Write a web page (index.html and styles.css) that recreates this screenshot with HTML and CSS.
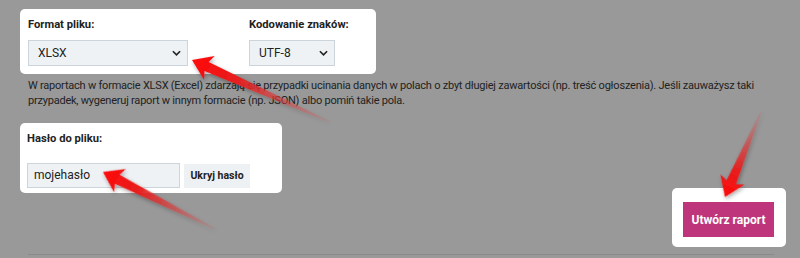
FILE: index.html
```html
<!DOCTYPE html>
<html lang="pl">
<head>
<meta charset="utf-8">
<title>Raport</title>
<link rel="stylesheet" href="styles.css">
</head>
<body>
<div class="page">
  <div class="card card-format">
    <div class="field field-format">
      <label class="label">Format pliku:</label>
      <div class="select select-wide"><span>XLSX</span><svg class="chev" viewBox="0 0 10 6" width="9" height="6"><path d="M1 1l4 4 4-4" fill="none" stroke="#222" stroke-width="1.8"/></svg></div>
    </div>
    <div class="field field-enc">
      <label class="label">Kodowanie znaków:</label>
      <div class="select select-narrow"><span>UTF-8</span><svg class="chev" viewBox="0 0 10 6" width="9" height="6"><path d="M1 1l4 4 4-4" fill="none" stroke="#222" stroke-width="1.8"/></svg></div>
    </div>
  </div>
  <p class="note">W raportach w formacie XLSX (Excel) zdarzają się przypadki ucinania danych w polach o zbyt długiej zawartości (np. treść ogłoszenia). Jeśli zauważysz taki przypadek, wygeneruj raport w innym formacie (np. JSON) albo pomiń takie pola.</p>
  <div class="row">
    <div class="card card-pass">
      <label class="label">Hasło do pliku:</label>
      <div class="pass-row">
        <div class="input">mojehasło</div>
        <button class="btn-light">Ukryj hasło</button>
      </div>
    </div>
    <div class="card card-submit">
      <button class="btn-primary">Utwórz raport</button>
    </div>
  </div>
  <div class="rule"></div>
</div>
<svg class="arrows" width="800" height="258" viewBox="0 0 800 258">
  <defs>
    <linearGradient id="ag" x1="0" y1="0" x2="1" y2="0">
      <stop offset="0" stop-color="#ff0a0a"/>
      <stop offset="0.3" stop-color="#e81c1c"/>
      <stop offset="1" stop-color="#d85a5a" stop-opacity="0.15"/>
    </linearGradient>
    <filter id="sh" x="-20%" y="-50%" width="140%" height="200%">
      <feGaussianBlur in="SourceAlpha" stdDeviation="2"/>
      <feOffset dx="1" dy="2" result="b"/>
      <feComponentTransfer><feFuncA type="linear" slope="0.35"/></feComponentTransfer>
      <feMerge><feMergeNode/><feMergeNode in="SourceGraphic"/></feMerge>
    </filter>
  </defs>
  <g filter="url(#sh)">
    <path transform="translate(192 60) rotate(24.19)" d="M0 0 L19 -13 L16 -5 L151 -0.8 L151 0.8 L16 5 L19 13 Z" fill="url(#ag)"/>
    <path transform="translate(103 172) rotate(26.97)" d="M0 0 L19 -13 L16 -5 L126 -0.8 L126 0.8 L16 5 L19 13 Z" fill="url(#ag)"/>
    <path transform="translate(725 197) rotate(-67.05)" d="M0 0 L19 -13 L16 -5 L92 -0.8 L92 0.8 L16 5 L19 13 Z" fill="url(#ag)"/>
  </g>
</svg>
</body>
</html>
```

FILE: styles.css
```css
html, body {
  margin: 0;
  padding: 0;
  background: #999999;
  width: 800px;
  height: 258px;
  overflow: hidden;
  font-family: Roboto, "Liberation Sans", Arial, sans-serif;
  color: #222;
}
.page {
  padding: 9px 14px 0 20px;
}
.card {
  background: #fff;
  border-radius: 5px;
  box-sizing: border-box;
}
.card-format {
  width: 356px;
  height: 65px;
  padding: 9px 8px 0 8px;
  display: flex;
  gap: 61px;
}
.field {
  display: flex;
  flex-direction: column;
}
.label {
  font-size: 11.2px;
  font-weight: bold;
  line-height: 13px;
  height: 22px;
  display: block;
}
.select {
  box-sizing: border-box;
  height: 26px;
  background: #eef2f5;
  border: 1px solid #cdd5dc;
  display: flex;
  align-items: center;
  justify-content: space-between;
  padding: 0 6px 0 9px;
  font-size: 12px;
}
.select-wide { width: 160px; }
.select-narrow { width: 86px; }
.note {
  margin: 4px 0 0 8px;
  font-size: 11px;
  letter-spacing: -0.22px;
  line-height: 15px;
  width: 736px;
}
.row {
  display: flex;
  justify-content: space-between;
  align-items: flex-start;
  margin-top: 15px;
}
.card-pass {
  width: 262px;
  height: 70px;
  padding: 9px 7px 0 7px;
}
.pass-row {
  display: flex;
  gap: 4px;
  align-items: center;
  margin-top: 9px;
}
.input {
  box-sizing: border-box;
  width: 153px;
  height: 25px;
  background: #eef2f5;
  border: 1px solid #cdd5dc;
  font-size: 12px;
  line-height: 23px;
  padding-left: 6px;
}
.btn-light {
  border: none;
  background: #eef1f4;
  height: 24px;
  width: 66px;
  font-family: inherit;
  font-weight: bold;
  font-size: 10.5px;
  color: #222;
  padding: 0;
}
.card-submit {
  width: 114px;
  height: 59px;
  margin-top: 65px;
  padding: 14px 0 0 11px;
}
.btn-primary {
  border: none;
  background: #bf357b;
  color: #fff;
  width: 91px;
  height: 35px;
  font-family: inherit;
  font-weight: bold;
  font-size: 12px;
  padding: 0;
}
.rule {
  margin: 7px 12px 0 8px;
  border-top: 1px solid #8a8a8a;
}
.arrows {
  position: absolute;
  left: 0;
  top: 0;
  pointer-events: none;
}
```
